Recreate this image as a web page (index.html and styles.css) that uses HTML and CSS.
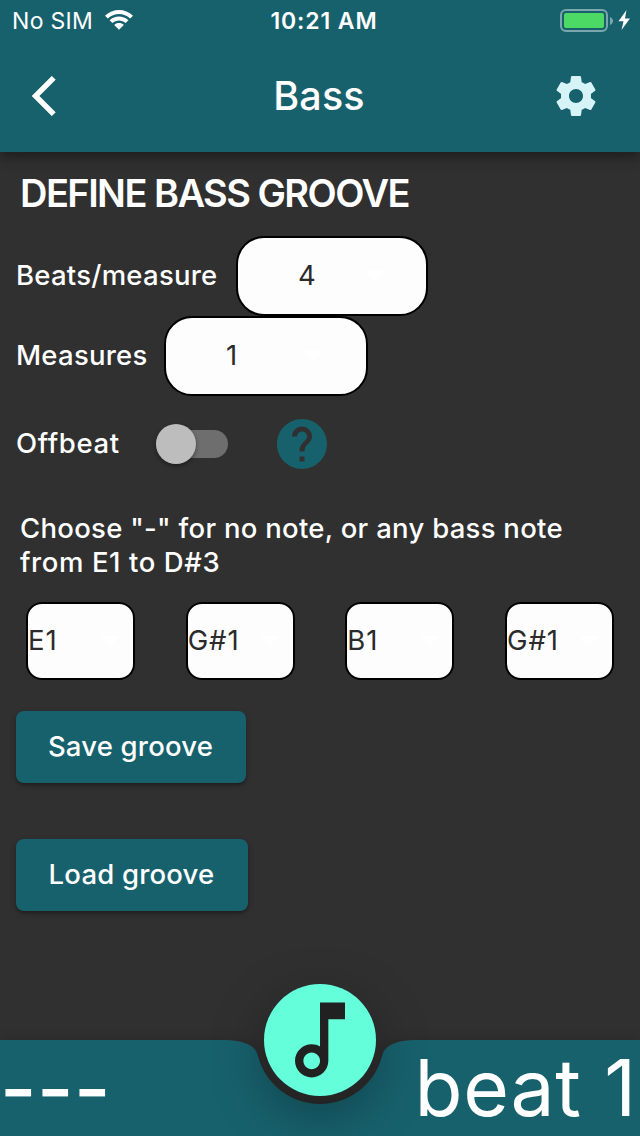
FILE: index.html
```html
<!DOCTYPE html>
<html lang="en">
<head>
<meta charset="utf-8">
<title>Bass</title>
<link rel="stylesheet" href="styles.css">
</head>
<body>
<div class="screen">
  <header class="header">
    <div class="status">
      <div class="carrier"><span class="carrier-name">No SIM</span>
        <svg class="wifi" width="28" height="20" viewBox="0 0 28 20"><path d="M0 5.700C7.800-1.900 20.200-1.900 28 5.700l-2.800 2.800C19 2.500 9 2.500 2.800 8.500z"/><path d="M4.600 10.300c5.300-5 13.500-5 18.800 0l-2.800 2.800c-3.700-3.500-9.500-3.500-13.200 0z"/><path d="M9.200 14.900c2.700-2.500 6.900-2.500 9.600 0L14 19.800z"/></svg>
      </div>
      <div class="clock">10:21 AM</div>
      <div class="power">
        <svg width="72" height="24" viewBox="0 0 72 24"><rect x="1" y="2" width="46" height="21" rx="5" fill="none" stroke="#7ba6ad" stroke-width="2"/><rect x="4" y="5" width="40" height="15" rx="2" fill="#4cd964"/><path d="M50 9c4 1.500 4 6.500 0 8z" fill="#7ba6ad"/><path d="M66.500 2L58.500 13.200H63.500L61.500 22 70 10.500H65z" fill="#fff"/></svg>
      </div>
    </div>
    <div class="appbar">
      <svg class="back" width="48" height="48" viewBox="0 0 24 24"><path d="M11.670 3.870L9.900 2.100 0 12l9.900 9.900 1.770-1.770L3.540 12z"/></svg>
      <h1 class="title">Bass</h1>
      <svg class="gear" width="48" height="48" viewBox="0 0 24 24"><path d="M19.430 12.980c.04-.32.07-.64.07-.98s-.03-.66-.07-.98l2.110-1.650c.19-.15.24-.42.12-.64l-2-3.460c-.12-.22-.39-.3-.61-.22l-2.490 1c-.52-.4-1.080-.73-1.690-.98l-.38-2.650C14.460 2.180 14.250 2 14 2h-4c-.25 0-.46.18-.49.42l-.38 2.650c-.61.25-1.170.59-1.690.98l-2.490-1c-.23-.09-.49 0-.61.22l-2 3.460c-.13.22-.07.49.12.64l2.110 1.650c-.04.32-.07.65-.07.98s.03.66.07.98l-2.110 1.650c-.19.15-.24.42-.12.64l2 3.460c.12.22.39.3.61.22l2.490-1c.52.4 1.080.73 1.690.98l.38 2.650c.03.24.24.42.49.42h4c.25 0 .46-.18.49-.42l.38-2.650c.61-.25 1.170-.59 1.690-.98l2.490 1c.23.09.49 0 .61-.22l2-3.460c.12-.22.07-.49-.12-.64l-2.110-1.650zM12 15.500c-1.930 0-3.500-1.570-3.500-3.500s1.570-3.500 3.500-3.500 3.500 1.570 3.500 3.500-1.570 3.500-3.500 3.500z"/></svg>
    </div>
  </header>

  <main class="content">
    <h2 class="heading">DEFINE BASS GROOVE</h2>
    <div class="row">
      <span class="label label-beats">Beats/measure</span>
      <div class="select select-beats"><span>4</span><i class="caret"></i></div>
    </div>
    <div class="row">
      <span class="label label-measures">Measures</span>
      <div class="select select-measures"><span>1</span><i class="caret"></i></div>
    </div>
    <div class="row row-offbeat">
      <span class="label label-offbeat">Offbeat</span>
      <div class="switch"><div class="thumb"></div></div>
      <svg class="help" width="60" height="60" viewBox="0 0 24 24"><path d="M12 2C6.480 2 2 6.480 2 12s4.480 10 10 10 10-4.480 10-10S17.520 2 12 2zm1 17h-2v-2h2v2zm2.070-7.750l-.9.920C13.450 12.900 13 13.500 13 15h-2v-.5c0-1.100.45-2.100 1.170-2.830l1.240-1.260c.37-.36.59-.86.59-1.410 0-1.100-.9-2-2-2s-2 .9-2 2H8c0-2.210 1.790-4 4-4s4 1.790 4 4c0 .88-.36 1.680-.93 2.250z"/></svg>
    </div>
    <p class="hint">Choose "-" for no note, or any bass note<br><span class="hint-range">from E1 to D#3</span></p>
    <div class="notes">
      <div class="note"><span>E1</span><i class="caret"></i></div>
      <div class="note"><span>G#1</span><i class="caret"></i></div>
      <div class="note"><span>B1</span><i class="caret"></i></div>
      <div class="note"><span>G#1</span><i class="caret"></i></div>
    </div>
    <div class="actions">
      <button class="btn btn-save">Save groove</button>
      <button class="btn btn-load">Load groove</button>
    </div>
  </main>

  <footer class="footer">
    <svg class="footer-bg" width="640" height="96" viewBox="0 0 640 96"><path d="M0 0H224Q254 0 257.940 15.630A64 64 0 0 0 382.060 15.630Q386 0 416 0H640V96H0z"/></svg>
    <div class="fab"><svg width="100" height="100" viewBox="0 0 24 24"><path d="M12 3l.01 10.550c-.59-.34-1.270-.55-2-.55C7.790 13 6 14.790 6 17s1.790 4 4.010 4S14 19.210 14 17V7h4V3h-6zm-1.990 16c-1.100 0-2-.9-2-2s.9-2 2-2 2 .9 2 2-.9 2-2 2z"/></svg></div>
    <div class="readout"><span class="dashes">---</span><span class="beat">beat 1</span></div>
  </footer>
</div>
</body>
</html>
```
FILE: styles.css
```css
* { box-sizing: border-box; }
body { margin: 0; background: #303030; }
svg { display: block; }
.screen {
  width: 640px; height: 1136px; display: flex; flex-direction: column;
  overflow: hidden; background: #303030; color: #fff;
  font-family: Inter, "Liberation Sans", sans-serif; font-size: 27.5px; font-weight: 500;
}
.header {
  height: 152px; flex: none; background: #17616d;
  box-shadow: 0 4px 8px -2px rgba(0,0,0,.2), 0 8px 10px rgba(0,0,0,.14), 0 2px 20px rgba(0,0,0,.12);
}
.status { height: 40px; display: grid; grid-template-columns: 1fr auto 1fr; align-items: center; padding: 0 8px 0 12px; font-size: 23px; line-height: 30px; }
.carrier { display: flex; align-items: center; gap: 12px; font-weight: 400; }
.carrier-name { letter-spacing: .3px; padding-top: 1px; }
.wifi { fill: #fff; }
.clock { font-weight: 600; letter-spacing: .9px; padding: 1px 0 0 4px; }
.power { display: flex; justify-content: flex-end; }
.appbar { height: 112px; display: flex; align-items: center; justify-content: space-between; padding: 0 40px 0 32px; }
.back { fill: #fff; stroke: #fff; stroke-width: .3; }
.gear { fill: #d6f3f7; }
.title { margin: 0; padding: 0 0 0 6px; font-size: 39.5px; font-weight: 550; letter-spacing: .2px; line-height: 46px; }
.content { flex: 1; display: flex; flex-direction: column; }
.heading { margin: 0; height: 84px; padding: 0 20px; line-height: 82px; font-size: 38px; font-weight: 600; letter-spacing: -1.55px; }
.row { height: 80px; display: flex; align-items: center; padding-left: 16px; }
.label { flex: none; padding-bottom: 2px; line-height: 34px; letter-spacing: .25px; white-space: nowrap; }
.label-beats { width: 220px; }
.label-measures { width: 148px; }
.label-offbeat { width: 140px; letter-spacing: .65px; }
.select { height: 80px; display: flex; align-items: center; justify-content: space-between; background: #fdfdfd; border: 2px solid #000; border-radius: 28px; color: #2b2b2b; font-weight: 400; }
.select span, .note span { padding-bottom: 2px; }
.select-beats { width: 192px; padding: 0 42px 0 60px; }
.select-measures { width: 204px; padding: 0 42px 0 60px; }
.caret { width: 20px; height: 10px; background: #fff; clip-path: polygon(0 0, 100% 0, 50% 100%); }
.row-offbeat { height: 96px; }
.switch { width: 72px; height: 28px; display: flex; align-items: center; border-radius: 14px; background: #6e6e6e; }
.thumb { width: 40px; height: 40px; flex: none; border-radius: 50%; background: #bdbdbd; box-shadow: 0 2px 4px rgba(0,0,0,.4); }
.help { margin-left: 44px; fill: #17616d; }
.hint { margin: 19px 20px 0; line-height: 34px; letter-spacing: .28px; white-space: nowrap; }
.hint-range { letter-spacing: .6px; }
.notes { display: flex; justify-content: space-between; margin: 23px 26px 0; }
.note { width: 109px; height: 78px; display: flex; align-items: center; justify-content: space-between; padding-right: 13px; background: #fdfdfd; border: 2px solid #000; border-radius: 16px; color: #2b2b2b; font-weight: 400; letter-spacing: .9px; }
.actions { display: flex; flex-direction: column; align-items: flex-start; gap: 56px; padding: 31px 16px 0; }
.btn { height: 72px; border: 0; border-radius: 8px; padding: 0 1px 2px 0; background: #17616d; color: #fff; font: inherit; letter-spacing: .2px; box-shadow: 0 3px 3px -1px rgba(0,0,0,.25), 0 2px 6px rgba(0,0,0,.2); }
.btn-save { width: 230px; }
.btn-load { width: 232px; }
.footer { position: relative; height: 96px; flex: none; }
.footer-bg { position: absolute; left: 0; top: 0; fill: #17616d; filter: drop-shadow(0 0 6px rgba(0,0,0,.16)); }
.fab { position: absolute; left: 264px; top: -56px; width: 112px; height: 112px; padding: 6px; border-radius: 50%; background: #64ffda; fill: #212121; box-shadow: 0 16px 52px rgba(0,0,0,.34); }
.readout { position: relative; display: flex; justify-content: space-between; height: 96px; line-height: 96px; font-size: 78.5px; font-weight: 400; white-space: nowrap; }
.dashes { height: 96px; font-size: 79px; font-weight: 500; letter-spacing: .5px; line-height: 96px; }
.beat { padding-right: 3px; letter-spacing: .7px; }
```
